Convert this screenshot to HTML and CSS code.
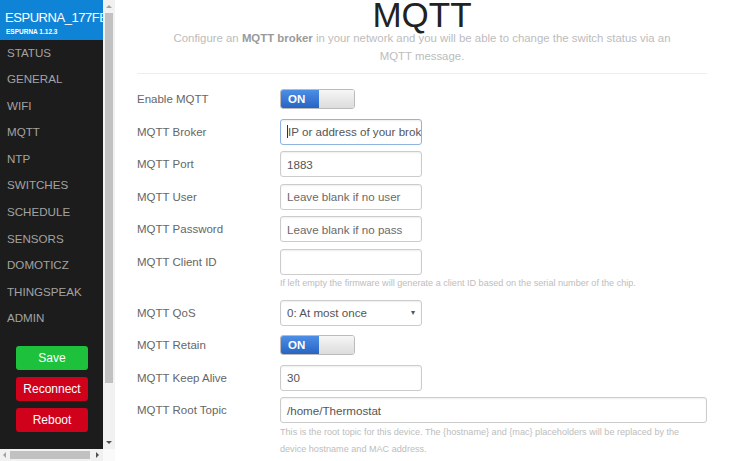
FILE: index.html
```html
<!DOCTYPE html>
<html>
<head>
<meta charset="utf-8">
<link rel="stylesheet" href="styles.css">
</head>
<body>
<div class="layout">
  <aside class="sidebar">
    <div class="menu">
      <div class="brand">
        <div class="brand-name">ESPURNA_177FB3</div>
        <div class="brand-ver">ESPURNA 1.12.3</div>
      </div>
      <ul class="nav">
        <li>STATUS</li>
        <li>GENERAL</li>
        <li>WIFI</li>
        <li>MQTT</li>
        <li>NTP</li>
        <li>SWITCHES</li>
        <li>SCHEDULE</li>
        <li>SENSORS</li>
        <li>DOMOTICZ</li>
        <li>THINGSPEAK</li>
        <li>ADMIN</li>
      </ul>
      <div class="actions">
        <button class="btn btn-save">Save</button>
        <button class="btn btn-red">Reconnect</button>
        <button class="btn btn-red">Reboot</button>
      </div>
    </div>
    <div class="vscroll">
      <span class="arr arr-up"></span>
      <div class="vthumb"></div>
      <span class="arr arr-down"></span>
    </div>
    <div class="hscroll">
      <span class="arr arr-left"></span>
      <div class="hthumb"></div>
      <span class="arr arr-right"></span>
    </div>
    <div class="corner"></div>
  </aside>
  <main class="main">
    <div class="header">
      <h1 class="title">MQTT</h1>
      <h2 class="subtitle">Configure an <strong>MQTT broker</strong> in your network and you will be able to change the switch status via an<br>MQTT message.</h2>
    </div>
    <div class="form">
      <div class="row">
        <label class="lbl">Enable MQTT</label>
        <div class="toggle"><span class="on">ON</span><span class="off"></span></div>
      </div>
      <div class="row">
        <label class="lbl">MQTT Broker</label>
        <div class="input focus"><span class="caret"></span><span class="ph dark">IP or address of your broker</span></div>
      </div>
      <div class="row">
        <label class="lbl">MQTT Port</label>
        <div class="input"><span class="val">1883</span></div>
      </div>
      <div class="row">
        <label class="lbl">MQTT User</label>
        <div class="input"><span class="ph">Leave blank if no user</span></div>
      </div>
      <div class="row">
        <label class="lbl">MQTT Password</label>
        <div class="input"><span class="ph">Leave blank if no pass</span></div>
      </div>
      <div class="row">
        <label class="lbl">MQTT Client ID</label>
        <div class="input"></div>
      </div>
      <div class="hint">If left empty the firmware will generate a client ID based on the serial number of the chip.</div>
      <div class="row">
        <label class="lbl">MQTT QoS</label>
        <div class="input select"><span class="val">0: At most once</span><span class="sel-arrow">&#9662;</span></div>
      </div>
      <div class="row">
        <label class="lbl">MQTT Retain</label>
        <div class="toggle"><span class="on">ON</span><span class="off"></span></div>
      </div>
      <div class="row">
        <label class="lbl">MQTT Keep Alive</label>
        <div class="input"><span class="val">30</span></div>
      </div>
      <div class="row">
        <label class="lbl">MQTT Root Topic</label>
        <div class="input wide"><span class="val">/home/Thermostat</span></div>
      </div>
      <div class="hint hint-root">This is the root topic for this device. The {hostname} and {mac} placeholders will be replaced by the<br>device hostname and MAC address.</div>
    </div>
  </main>
</div>
</body>
</html>
```

FILE: styles.css
```css
html, body {
  margin: 0;
  padding: 0;
}
body {
  width: 740px;
  height: 461px;
  overflow: hidden;
  background: #fff;
  font-family: "Liberation Sans", Arial, sans-serif;
}
.layout {
  display: flex;
  height: 461px;
}

/* sidebar */
.sidebar {
  width: 115px;
  flex: none;
  display: grid;
  grid-template-columns: 103px 12px;
  grid-template-rows: 449px 12px;
}
.menu {
  background: #1d1c1c;
  overflow: hidden;
  display: flex;
  flex-direction: column;
}
.brand {
  background: #0f84d7;
  height: 39.5px;
  flex: none;
  box-sizing: border-box;
  padding: 9px 0 0 5px;
  color: #fff;
  white-space: nowrap;
}
.brand-name {
  font-size: 13px;
  line-height: 17px;
  letter-spacing: -0.45px;
}
.brand-ver {
  font-size: 6.5px;
  font-weight: bold;
  line-height: 10px;
  margin-top: 1px;
  margin-left: 1px;
}
.nav {
  list-style: none;
  margin: 0;
  padding: 0;
}
.nav li {
  height: 26.6px;
  line-height: 26.6px;
  padding-left: 7px;
  font-size: 11.6px;
  color: #a3a3a3;
  white-space: nowrap;
}
.actions {
  display: flex;
  flex-direction: column;
  align-items: flex-start;
  gap: 7px;
  padding: 14px 0 0 16px;
}
.btn {
  width: 72px;
  height: 24px;
  border: none;
  border-radius: 3px;
  color: #fff;
  font-family: "Liberation Sans", Arial, sans-serif;
  font-size: 12px;
  padding: 0;
}
.btn-save {
  background: #1dc13c;
}
.btn-red {
  background: #d0021b;
}
.vscroll {
  background: #f1f1f1;
  display: flex;
  flex-direction: column;
  align-items: center;
}
.vthumb {
  width: 8px;
  height: 370px;
  margin-top: 5px;
  background: #c1c1c1;
}
.arr {
  width: 0;
  height: 0;
  border-style: solid;
  border-color: transparent;
}
.arr-up {
  margin-top: 5px;
  border-width: 0 3px 3px 3px;
  border-bottom-color: #a3a3a3;
}
.arr-down {
  margin-top: auto;
  margin-bottom: 5px;
  border-width: 3px 3px 0 3px;
  border-top-color: #505050;
}
.hscroll {
  background: #f1f1f1;
  display: flex;
  align-items: center;
}
.arr-left {
  margin-left: 3px;
  border-width: 3px 3px 3px 0;
  border-right-color: #a3a3a3;
}
.hthumb {
  width: 80px;
  height: 8px;
  margin-left: 4px;
  background: #c1c1c1;
}
.arr-right {
  margin-left: auto;
  margin-right: 4px;
  border-width: 3px 0 3px 3px;
  border-left-color: #505050;
}
.corner {
  background: #fafafa;
}

/* main */
.main {
  flex: 1;
  padding: 0 33px 0 22px;
  min-width: 0;
}
.header {
  text-align: center;
  border-bottom: 1px solid #eee;
  padding-bottom: 8px;
}
.title {
  margin: 0;
  font-size: 35px;
  line-height: 29px;
  font-weight: normal;
  color: #222;
}
.subtitle {
  margin: 0;
  font-size: 11.4px;
  line-height: 18px;
  font-weight: normal;
  color: #bcbcbc;
  white-space: nowrap;
}
.subtitle strong {
  color: #9a9a9a;
}
.form {
  padding-top: 9px;
}
.row {
  height: 32.5px;
  display: flex;
  align-items: center;
}
.lbl {
  width: 143px;
  flex: none;
  font-size: 11.5px;
  color: #666;
}
.input {
  width: 142px;
  height: 26px;
  box-sizing: border-box;
  border: 1px solid #ccc;
  border-radius: 3px;
  box-shadow: inset 0 1px 2px #eee;
  padding: 0 6px;
  display: flex;
  align-items: center;
  overflow: hidden;
  white-space: nowrap;
  font-size: 11.6px;
}
.input.focus {
  border-color: #8fb4df;
}
.input.wide {
  width: 427px;
}
.caret {
  width: 1px;
  height: 13px;
  background: #333;
  flex: none;
}
.ph {
  color: #6a6a6a;
}
.ph.dark {
  color: #555;
}
.val {
  color: #555;
}
.select {
  background: #fff;
}
.sel-arrow {
  margin-left: auto;
  font-size: 8px;
  color: #555;
}
.toggle {
  width: 75px;
  height: 20px;
  display: flex;
  border-radius: 3px;
  overflow: hidden;
  box-sizing: border-box;
  border: 1px solid #bbb;
}
.toggle .on {
  width: 38px;
  background: linear-gradient(#4d8ee6, #2764c2);
  color: #fff;
  font-size: 11.5px;
  font-weight: bold;
  line-height: 18px;
  padding-left: 7px;
  box-sizing: border-box;
}
.toggle .off {
  flex: 1;
  background: linear-gradient(#f6f6f6, #dcdcdc);
}
.hint {
  font-size: 9.1px;
  line-height: 17px;
  color: #bdbdbd;
  margin: -3px 0 4.5px 143px;
  white-space: nowrap;
}
.hint-root {
  margin-bottom: 0;
}
```
